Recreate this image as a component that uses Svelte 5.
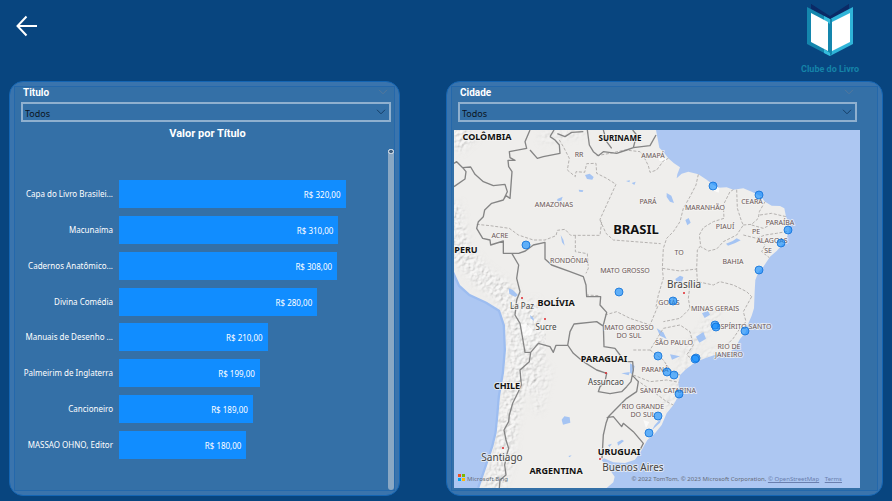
<script>
  const books = [
    { title: 'Capa do Livro Brasilei...', value: 320 },
    { title: 'Macunaíma', value: 310 },
    { title: 'Cadernos Anatômico...', value: 308 },
    { title: 'Divina Comédia', value: 280 },
    { title: 'Manuais de Desenho ...', value: 210 },
    { title: 'Palmeirim de Inglaterra', value: 199 },
    { title: 'Cancioneiro', value: 189 },
    { title: 'MASSAO OHNO, Editor', value: 180 }
  ];
  const axisMax = 380;

  const countries = [
    ['COLÔMBIA', 487, 140, 9],
    ['SURINAME', 620, 141, 8],
    ['BRASIL', 636, 234, 13],
    ['PERU', 466, 253, 9],
    ['BOLÍVIA', 556, 306, 9],
    ['PARAGUAI', 604, 362, 9],
    ['CHILE', 507, 389, 9],
    ['ARGENTINA', 556, 474, 9],
    ['URUGUAI', 619, 455, 9]
  ];
  const states = [
    ['RR', 579, 157],
    ['AMAPÁ', 653, 158],
    ['AMAZONAS', 554, 207],
    ['PARÁ', 648, 204],
    ['ACRE', 500, 238],
    ['RONDÔNIA', 569, 263],
    ['MATO GROSSO', 625, 273],
    ['MARANHÃO', 705, 210],
    ['CEARÁ', 752, 204],
    ['PIAUÍ', 725, 229],
    ['PARAÍBA', 780, 225],
    ['PE', 756, 234],
    ['ALAGOAS', 772, 243],
    ['SE', 768, 253],
    ['TO', 679, 255],
    ['BAHIA', 733, 264],
    ['GOIÁS', 669, 305],
    ['MINAS GERAIS', 715, 311],
    ['ESPÍRITO SANTO', 744, 329],
    ['SÃO PAULO', 674, 345],
    ['RIO DE', 729, 349],
    ['JANEIRO', 729, 357],
    ['MATO GROSSO', 629, 330],
    ['DO SUL', 629, 338],
    ['PARANÁ', 655, 372],
    ['SANTA CATARINA', 668, 393],
    ['RIO GRANDE', 643, 409],
    ['DO SUL', 643, 417]
  ];
  const cities = [
    ['Brasília', 684, 288, 10],
    ['La Paz', 522, 309, 8],
    ['Sucre', 546, 330, 8],
    ['Assuncao', 606, 385, 8],
    ['Santiago', 502, 461, 10],
    ['Buenos Aires', 633, 471, 10]
  ];
  const capitals = [
    [684, 293], [522, 298], [545, 319], [606, 373], [503, 448], [600, 459]
  ];
  const sales = [
    [713, 186], [759, 195], [788, 230], [781, 243], [759, 270],
    [673, 301], [619, 292], [526, 245], [715, 325], [716, 327],
    [745, 331], [658, 356], [696, 358], [695, 359], [667, 372],
    [674, 375], [679, 394], [658, 416], [649, 433]
  ];

  const price = (v) => `R$ ${v},00`;
</script>

{#snippet chevron()}
  <svg viewBox="0 0 10 6" width="10" height="6" aria-hidden="true">
    <path d="M1 .8 5 4.8 9 .8" fill="none" stroke="currentColor" />
  </svg>
{/snippet}

{#snippet filter(id, name)}
  <div class="filter">
    <div class="filter-head">
      <label for={id}>{name}</label>
      <button type="button" class="more" aria-label="Opções de {name}">{@render chevron()}</button>
    </div>
    <div class="field">
      <select {id}><option>Todos</option></select>
      <span class="caret">{@render chevron()}</span>
    </div>
  </div>
{/snippet}

<div class="page">
  <header>
    <button type="button" class="back" aria-label="Voltar">
      <svg viewBox="0 0 22 22" width="22" height="22">
        <path d="M21 11H1.5M10.5 1.5 1.5 11l9 9.500" fill="none" stroke="#fff" stroke-width="2" />
      </svg>
    </button>
    <div class="brand">
      <svg viewBox="0 0 46 52" width="46" height="52" aria-hidden="true">
        <path d="M4 0 23 12 42 0V5L23 17 4 5z" fill="#0b2a66" />
        <path d="M0 3 23 15V52L0 40z" fill="#1486ad" />
        <path d="M46 3 23 15V52L46 40z" fill="#2fb4d8" />
        <path d="M4 0 23 13 42 0V2L23 15 4 3z" fill="#0b2a66" />
        <path d="M17 12l6 3v5l-6-4zM17 45l6 4v3l-6-3z" fill="#35bddd" />
        <path d="M23 15h2v35l-2 2z" fill="#1486ad" />
        <path d="M4 9 21 18V47L4 38z" fill="#fff" />
        <path d="M43 9 25 18V47L43 38z" fill="#fff" />
      </svg>
      <span>Clube do Livro</span>
    </div>
  </header>

  <main>
    <section class="panel">
      <div class="inner left">
        {@render filter('titulo', 'Titulo')}
        <h2>Valor por Título</h2>
        <div class="chart">
          <ul>
            {#each books as b}
              <li>
                <span class="name">{b.title}</span>
                <span class="track">
                  <span class="bar" style="width: {(b.value / axisMax) * 100}%">{price(b.value)}</span>
                </span>
              </li>
            {/each}
          </ul>
          <div class="scroll"><i></i></div>
        </div>
      </div>
    </section>

    <section class="panel">
      <div class="inner right">
        {@render filter('cidade', 'Cidade')}
        <div class="map">
          <svg viewBox="454 130 406 358" preserveAspectRatio="xMidYMid slice" role="img" aria-label="Mapa de vendas por cidade">
            <defs>
              <filter id="relief" x="0" y="0" width="100%" height="100%">
                <feTurbulence type="fractalNoise" baseFrequency="0.09" numOctaves="4" seed="8" />
                <feDiffuseLighting surfaceScale="5" lighting-color="#fff" diffuseConstant="1.100">
                  <feDistantLight azimuth="225" elevation="50" />
                </feDiffuseLighting>
              </filter>
              <filter id="soft"><feGaussianBlur stdDeviation="9" /></filter>
              <path id="land" d="M12 15H618L628 68 640 80 655 100 672 115 690 127 682 148 680 160 695 146 715 140 745 148 770 164 790 180 805 188 830 187 850 194 880 190 905 200 930 212 945 230 965 242 990 243 1003 250 1008 275 1018 300 1018 318 1010 338 1000 355 980 378 960 395 940 425 925 442 916 465 914 500 912 550 905 572 893 600 887 622 870 642 856 668 840 680 800 688 765 700 735 712 705 735 690 750 685 775 688 808 670 840 650 865 635 900 615 925 592 945 575 975 555 1004 525 1014 490 1012 462 1000 455 1006 480 1035 494 1055 490 1072 470 1089H88L110 1025 130 965 140 925 145 875 150 815 162 745 168 675 165 600 150 555 110 530 60 507 30 480 12 440z" />
              <clipPath id="land-clip"><use href="#land" /></clipPath>
              <mask id="andes" maskUnits="userSpaceOnUse" x="0" y="0" width="1230" height="1100">
                <path filter="url(#soft)" fill="none" stroke="#fff" stroke-width="62" d="M10 60 60 15M0 240 30 380 90 450 160 500 200 580 205 700 190 810 170 900 160 1000 130 1090M230 530 260 640 250 720 230 800" />
                <path filter="url(#soft)" fill="none" stroke="#999" stroke-width="28" d="M250 700 290 740 260 860M690 700 760 620 800 560M650 850 700 730 800 680M270 40 400 20" />
              </mask>
            </defs>

            <rect x="454" y="130" width="406" height="358" fill="#adc7f2" />
            <g transform="translate(450 125) scale(.33333333)">
              <path d="M12 440 30 480 60 507 110 530 150 555 165 600 168 675 162 745 150 815 145 875 140 925 130 965 110 1025 88 1089" fill="none" stroke="#9dbdf0" stroke-width="14" />
              <use href="#land" fill="#efeeec" />
              <g clip-path="url(#land-clip)">
                <g mask="url(#andes)">
                  <rect x="0" y="0" width="1230" height="1100" filter="url(#relief)" opacity=".5" />
                </g>
                <path d="M210 600l20-4 18 20-8 16-24-2zM120 150l26-8zM790 175l20 6-4 22-20-8zM624 95l26 4-4 12-18-4zM580 885l18 6-10 18z" fill="#fff" opacity=".7" />
              </g>
              <g class="water">
                <path d="M405 150l14-4 12 10-4 8-16-2zM386 194l14 2-2 5-10-1zM322 222l16-7-4 12-12 2zM176 490l12 4 16 16-8 6-18-10zM332 330l8 14 4 18-8-10zM528 168l12-2-2 6zM545 174l12-4-4 10zM650 204l14 8 8 22-12-4-10-14zM706 285l10-6 6 14-10 8zM676 462l14-10 10 4-4 14-14 6zM828 356l20-8 12-8 12 6-16 8-22 8zM335 884l8-10 16 3 2 16-22 6zM502 952l14-8 6 4-18 14zM474 960l12-4-8 10zM355 993l10-2-6 6zM240 570l10 8 2 10-10-8zM738 635l22-14 8 20-20 12zM756 565l18-8 6 12-16 10zM620 610l20 12 10 20-20-10zM660 688l30 6-24 10zM514 745l26-4-4 10zM540 715l14 8-6 26-8-6zM606 915l24-22 6-16-22 24z" />
              </g>
              <g class="state">
                <path d="M80 298 120 302 178 310 205 330 250 345 285 345 318 332 322 316 345 313 362 331H450L455 290 450 283 498 178 470 160 440 145 438 115 410 116 404 142 378 140 376 155 352 135 358 100 340 65 325 40M440 92 480 85 525 75 570 80 580 92 595 122 600 142 620 135 640 108 655 100M450 285 468 325 490 345 632 356M376 332V380L412 386 415 430 408 445M745 148 738 180 720 215 700 250 690 290 670 320 650 340 640 370 637 430 640 460 625 510 618 545M637 430 690 438 740 432 742 375 752 362 748 330 760 308 790 290 822 280 820 240 840 200 850 194M860 194 862 250 875 290 880 300 860 330 820 350 800 372 775 378 752 365M740 432 742 470 790 480 810 470 850 480 890 500 905 515M742 470 720 480 715 520 720 550 690 580 640 590M880 300 905 298 925 280 928 260 945 230M930 270 965 265 1008 275M905 300 940 310 980 290 1018 300M880 330 920 340 945 330 980 325 1018 318M930 340 945 360 935 380 958 398M905 515 880 560 888 590 870 610 850 640 830 660M408 510 450 512M465 570 500 560 540 580 600 600 625 540M550 675 600 675 640 610 690 600 720 620 730 660 710 690 740 712M600 675 640 705 660 735 690 750M550 750 600 770 650 765 688 772M560 765 610 800 650 830 670 840" />
              </g>
              <g class="border">
                <path d="M240 15 225 50 230 70 178 80 180 98 195 106 174 106 176 125 186 140 180 220 168 212 160 225 125 235 104 255 100 275 85 290 80 310 98 340 120 345 122 360 160 348V385H206L226 378 250 360 285 352V402L305 420 360 440 400 455 408 480 410 515H452L450 540 470 562 460 600 462 665 495 670 510 690 520 710H548L550 735 543 770 530 785 515 800 480 806 445 800 450 785 465 770 470 745 440 735 400 710 370 685 353 660M12 185 45 162 48 140 38 128 20 110 12 115M38 128 62 126 75 148 100 170 130 182 165 178 172 200 160 225M186 386 206 420 200 460 210 500 200 525 195 570 210 595 218 640 225 682 242 682 265 655 300 665 310 682 318 661H353L360 620 372 597 440 590 462 605M242 682 238 710 210 735 214 780 205 800 188 835 178 870 176 890 162 915 168 945 176 970 170 990 164 1020 168 1050 150 1065 148 1089M548 752 565 770 560 800 530 820 500 850 475 875 468 895 460 930 456 1000M470 878 490 875 515 905 520 895 550 920 580 955 570 975M240 75 262 100 280 95 330 85 328 60 315 45 300 35M300 35 312 15M322 26 345 35 365 22 400 20M412 15 418 60 430 80 445 92 460 80 500 85 530 75 550 68 600 62 618 30M460 15 470 50 485 70M548 15 560 30 550 68" />
              </g>
            </g>

            {#each capitals as [x, y]}
              <circle cx={x} cy={y} r="1" fill="#e0282e" />
            {/each}
            <g class="lbl st">
              {#each states as [t, x, y]}<text {x} {y}>{t}</text>{/each}
            </g>
            <g class="lbl city">
              {#each cities as [t, x, y, size]}<text {x} {y} font-size={size}>{t}</text>{/each}
            </g>
            <g class="lbl country">
              {#each countries as [t, x, y, size]}<text {x} {y} font-size={size}>{t}</text>{/each}
            </g>
            {#each sales as [x, y]}
              <circle class="sale" cx={x} cy={y} r="4" />
            {/each}
            <g>
              <path d="M458 474h3v3h-3z" fill="#f25022" /><path d="M462 474h3v3h-3z" fill="#7fba00" />
              <path d="M458 478h3v3h-3z" fill="#00a4ef" /><path d="M462 478h3v3h-3z" fill="#ffb900" />
            </g>
          </svg>
          <span class="bing">Microsoft Bing</span>
          <span class="credits">© 2022 TomTom, © 2023 Microsoft Corporation, <a href="#osm">© OpenStreetMap</a> <a href="#terms">Terms</a></span>
        </div>
      </div>
    </section>
  </main>
</div>

<style>
  :global(body) {
    background: #08457f;
  }
  .page {
    box-sizing: border-box;
    min-height: 100vh;
    display: flex;
    flex-direction: column;
    font-family: 'Noto Sans', sans-serif;
    color: #fff;
  }
  header {
    height: 81px;
    box-sizing: border-box;
    display: flex;
    justify-content: space-between;
    align-items: flex-start;
    padding: 4px 33px 0 16px;
  }
  button {
    border: 0;
    padding: 0;
    background: none;
    color: inherit;
    display: flex;
  }
  .back {
    margin-top: 11px;
  }
  .brand {
    display: flex;
    flex-direction: column;
    align-items: center;
    gap: 7px;
  }
  .brand span {
    font: 700 9px/12px Roboto, sans-serif;
    color: #1583a8;
  }
  main {
    flex: 1;
    display: grid;
    grid-template-columns: 391fr 437fr;
    gap: 46px;
    padding: 0 9px 5px;
  }
  .panel {
    box-sizing: border-box;
    display: flex;
    border: 1px solid #1465b3;
    border-radius: 14px;
    padding: 4px;
    background: #3a74ad;
    min-width: 0;
  }
  .inner {
    flex: 1;
    min-width: 0;
    display: flex;
    flex-direction: column;
    border: 1px solid #2468ab;
    background: #3470a7;
  }
  .left {
    padding: 0 0 0 6px;
  }
  .left .filter {
    margin: 0 3px 0 0;
  }
  .right {
    padding: 0 17px 2px 2px;
  }
  .right .filter {
    margin: 0 3px 0 4px;
  }
  .filter-head {
    display: flex;
    justify-content: space-between;
    height: 15px;
    padding: 0 3px 0 2px;
  }
  label {
    font: 700 10px/12px Roboto, sans-serif;
  }
  .more {
    color: #54789c;
    padding-top: 2px;
  }
  .field {
    display: flex;
    align-items: center;
    height: 20px;
    position: relative;
  }
  select {
    appearance: none;
    width: 100%;
    height: 20px;
    box-sizing: border-box;
    border: 2px solid #8fb0cf;
    border-radius: 0;
    background: transparent;
    padding: 3px 2px 0;
    font: 9px/14px 'Noto Sans', sans-serif;
    color: #0b1420;
  }
  .caret {
    position: absolute;
    right: 5px;
    display: flex;
    color: #173f68;
    pointer-events: none;
  }
  h2 {
    margin: 4px 0 0;
    text-align: center;
    font: 700 11px/16px Roboto, sans-serif;
  }
  .chart {
    flex: 1;
    display: flex;
    margin-top: 6px;
  }
  ul {
    flex: 1;
    list-style: none;
    margin: 0;
    padding: 32px 0 31px;
    display: flex;
    flex-direction: column;
    justify-content: space-between;
  }
  li {
    display: flex;
    align-items: center;
    gap: 6px;
    height: 28px;
  }
  .name {
    width: 92px;
    text-align: right;
    white-space: nowrap;
    font-size: 8px;
    line-height: 12px;
  }
  .track {
    flex: 1;
    display: flex;
  }
  .bar {
    box-sizing: border-box;
    background: #118dff;
    text-align: right;
    padding: 1px 5px 0 0;
    font-size: 8px;
    line-height: 27px;
  }
  .scroll {
    width: 6px;
    margin: 1px 0 0;
    border-radius: 3px;
    background: #8aa8c4;
  }
  .scroll i {
    display: block;
    box-sizing: border-box;
    height: 5px;
    border: 1px solid #e4ebf2;
    border-radius: 3px;
    background: #3f5f80;
  }
  .map {
    flex: 1;
    position: relative;
    margin-top: 8px;
    min-height: 240px;
    background: #adc7f2;
  }
  .map svg {
    position: absolute;
    width: 100%;
    height: 100%;
  }
  .water {
    fill: #a5c4f3;
  }
  .border {
    fill: none;
    stroke: #858585;
    stroke-width: 4;
    stroke-linejoin: round;
  }
  .state {
    fill: none;
    stroke: #b5b2b0;
    stroke-width: 3;
    stroke-dasharray: 9 5;
  }
  .lbl {
    text-anchor: middle;
    paint-order: stroke;
    stroke: #f6f5f3;
    stroke-width: 2;
    stroke-opacity: 0.7;
    stroke-linejoin: round;
  }
  .st {
    font-size: 7px;
    fill: #6a5757;
  }
  .city {
    fill: #444;
  }
  .country {
    font-weight: 700;
    fill: #111;
  }
  .sale {
    fill: #118dff;
    fill-opacity: 0.65;
    stroke: #0f6fd6;
    stroke-opacity: 0.8;
  }
  .bing,
  .credits {
    position: absolute;
    bottom: 4px;
    font: 6px/10px 'Noto Sans', sans-serif;
    color: #666c78;
    white-space: nowrap;
  }
  .bing {
    left: 13px;
  }
  .credits {
    right: 18px;
  }
  .credits a {
    color: #6a7fae;
    margin-right: 4px;
  }
  .credits a:last-child {
    margin-right: 0;
  }
</style>
